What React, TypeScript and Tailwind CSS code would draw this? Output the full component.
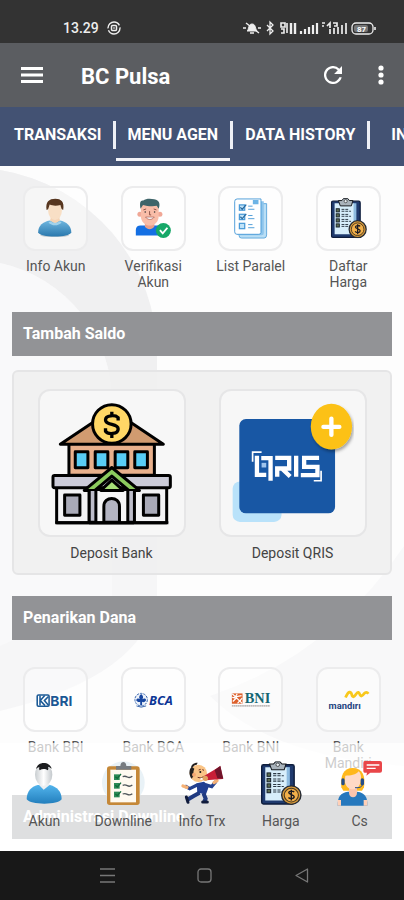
import type { ReactNode } from "react";

function Clipboard({ x, y, width, height }: { x: number; y: number; width: number; height: number }) {
  return (
    <svg x={x} y={y} width={width} height={height} viewBox="0 0 115 128" preserveAspectRatio="none">
      <rect x="2" y="10" width="91" height="115" rx="5" fill="#1f3a6e" stroke="#0e1d3c" strokeWidth="4" />
      <path d="M12 17h62v76l-12 22H12z" fill="#d7eefb" />
      <path d="M72 17h9v68h-9z" fill="#8dbbe0" />
      <path d="M24 8h11l6-7h12l6 7h11l-5 17H30z" fill="#a9b3bb" stroke="#15181d" strokeWidth="3" />
      <circle cx="47" cy="10" r="5" fill="#e8eef2" stroke="#222" strokeWidth="2" />
      {[34, 50, 66, 82].map((row) => (
        <g key={row}>
          <rect x="17" y={row} width="10" height="10" fill="#5d6f50" stroke="#18222c" strokeWidth="3" />
          <path d={`M34 ${row + 2}h22M34 ${row + 8}h30`} stroke="#2a3743" strokeWidth="3" strokeDasharray="9 3" />
        </g>
      ))}
      <circle cx="85" cy="99" r="27" fill="#d89a3a" stroke="#252a33" strokeWidth="4" />
      <circle cx="85" cy="99" r="20" fill="#f2b04a" stroke="#4b3a22" strokeWidth="3" />
      <path d="M93 90c-3-4-15-4-15 2s15 5 15 12-12 7-16 2M85 83v32" fill="none" stroke="#1b1b22" strokeWidth="4" />
    </svg>
  );
}

const infoAkun = (
  <svg viewBox="70 58 195 195" className="size-full" aria-hidden="true">
    <defs>
      <linearGradient id="shirt" x1="0" y1="0" x2="0" y2="1">
        <stop offset="0" stopColor="#6fb6df" />
        <stop offset="1" stopColor="#2a78ad" />
      </linearGradient>
    </defs>
    <ellipse cx="165" cy="210" rx="46" ry="5" fill="#c5cdd2" />
    <path d="M112 200c0-22 16-34 37-38h33c20 4 36 17 36 38-5 9-25 13-53 13s-48-4-53-13z" fill="url(#shirt)" />
    <path d="M150 162l16 10 16-10-5-18h-22z" fill="#f4d3b4" />
    <ellipse cx="166" cy="131" rx="22" ry="29" fill="#f8dfc5" />
    <path d="M139 128c-4-26 8-36 28-36 18 0 30 10 25 36l-5-3-4-13c-12 4-25 3-34-1l-5 15z" fill="#57361f" />
    <path d="M152 164c8 7 20 7 29 0l6 4c-10 12-32 12-42 0z" fill="#9fd1ec" />
  </svg>
);

const verifikasi = (
  <svg viewBox="362 58 195 195" className="size-full" aria-hidden="true">
    <path d="M403 210v-18c0-10 6-14 15-14h56c10 0 16 6 16 16v16z" fill="#146fe3" />
    <path d="M432 170h30v12c-8 10-22 10-30 0z" fill="#e89e8a" />
    <circle cx="416" cy="142" r="8" fill="#f0a796" />
    <circle cx="480" cy="142" r="8" fill="#f0a796" />
    <path d="M419 112h57v36c0 18-14 30-28 30s-29-12-29-30z" fill="#f9bda8" />
    <path d="M418 124c-3-16-2-28 9-26 10-9 38-5 45 0 8 5 8 17 4 26l-6-9c-14 3-32 1-44-3z" fill="#3e6469" />
    <path d="M427 128l9-3M460 125l9 3M447 132v12h5" stroke="#8a5044" strokeWidth="3" fill="none" />
    <circle cx="433" cy="135" r="2.5" fill="#333" />
    <circle cx="463" cy="135" r="2.5" fill="#333" />
    <path d="M434 151c8 10 20 10 28 0z" fill="#fff" stroke="#9c4b40" strokeWidth="2" />
    <circle cx="491" cy="194" r="24" fill="#16a868" />
    <path d="M480 193l9 10 15-18" stroke="#fff" strokeWidth="6" fill="none" />
  </svg>
);

const listParalel = (
  <svg viewBox="51 58 195 195" className="size-full" aria-hidden="true">
    <path d="M112 108h88v100q0 10-8 10h-72q-8 0-8-8z" fill="#b9def5" stroke="#5fa8dc" strokeWidth="3" />
    <path d="M105 100h86v102q0 7-7 7h-70q-9 0-9-8z" fill="#8ec5ec" />
    <path d="M106 93h76v107q0 6-7 6h-70q-7 0-7-8v-97q0-8 8-8z" fill="#fff" stroke="#4a9bd8" strokeWidth="3" />
    <path d="M156 96h18v14h-18z" fill="#6db4e6" />
    {[112, 142, 171].map((row) => (
      <g key={row}>
        <rect x="113" y={row} width="17" height="17" fill="#c0e3f8" stroke="#4a9bd8" strokeWidth="4" />
        <path d={`M141 ${row + 4}h14M141 ${row + 14}h20`} stroke="#4a9bd8" strokeWidth="3" />
      </g>
    ))}
    <path d="M116 120l6 6 13-15M116 150l6 6 13-15" stroke="#27699f" strokeWidth="4" fill="none" />
  </svg>
);

const daftarHarga = (
  <svg viewBox="346 58 195 195" className="size-full" aria-hidden="true">
    <Clipboard x={387} y={90} width={116} height={129} />
  </svg>
);

const depositBank = (
  <svg viewBox="150 305 370 370" className="size-[123px]" aria-hidden="true" stroke="#000" strokeWidth="9" strokeLinejoin="round">
    <path d="M207 430h257v95H207z" fill="#e8b08c" />
    <path d="M181 432l100-67h110l100 67z" fill="#d19b70" />
    {[226, 286, 346, 405].map((x) => (
      <rect key={x} x={x} y="455" width="38" height="48" fill="#58cdf5" />
    ))}
    <path d="M170 560h331v108H170z" fill="#f3f3f5" />
    <rect x="159" y="526" width="353" height="37" rx="5" fill="#cbcbd8" />
    <path d="M268 568h134v100H268z" fill="#f6f6f7" />
    <path d="M253 571l83-69 83 69h-32l-51-43-51 43z" fill="#8ccb5e" />
    <path d="M303 571l33-31 34 31z" fill="#a7de78" />
    <path d="M268 573v94h20v-94M384 573v94h20v-94" fill="#bdbdca" />
    <path d="M312 667v-48c0-32 47-32 47 0v48z" fill="#b3b4c2" />
    <rect x="194" y="585" width="46" height="61" fill="#a9aab8" />
    <rect x="431" y="585" width="46" height="61" fill="#a9aab8" />
    <path d="M166 668h340" />
    <circle cx="336" cy="371" r="58" fill="#ffd766" />
    <path d="M355 361v-9c-9-9-38-8-38 7 0 18 38 9 38 27 0 17-31 17-38 7v-9M336 334v14M336 398v15" fill="none" strokeWidth="10" />
  </svg>
);

const depositQris = (
  <svg viewBox="92 305 370 370" className="size-[123px]" aria-hidden="true">
    <defs>
      <filter id="badge" x="-20%" y="-20%" width="150%" height="150%">
        <feDropShadow dx="4" dy="7" stdDeviation="5" floodOpacity="0.35" />
      </filter>
    </defs>
    <rect x="97" y="544" width="147" height="122" rx="22" fill="#b9e2fa" />
    <rect x="117" y="356" width="288" height="284" rx="20" fill="#1857a4" />
    <path d="M157 485v-29h27M341 542h22v-30" stroke="#fff" strokeWidth="5" fill="none" />
    <g fill="none" stroke="#fff" strokeWidth="13">
      <path d="M170 467v57h28M183 474h28v68" />
      <path d="M231 530v-25h36v-32h-42M244 504l26 25M288 467v63M357 473h-45v27h40v25h-50" />
    </g>
    <path d="M184 488h14v14h-14z" fill="#9fc4ec" />
    <ellipse cx="394" cy="379" rx="62" ry="69" fill="#fcc112" filter="url(#badge)" />
    <path d="M394 355v49M370 380h48" stroke="#fff" strokeWidth="13" strokeLinecap="round" />
  </svg>
);

const bri = (
  <svg viewBox="70 246 195 195" className="size-full" role="img" aria-label="BRI">
    <rect x="109" y="329" width="38" height="36" rx="4" fill="#fff" stroke="#1d5b97" strokeWidth="5" />
    <path d="M118 331v32M133 331l-14 16 15 16M145 334l-13 13 13 15" stroke="#1d5b97" strokeWidth="5" fill="none" />
    <text x="151" y="363" fontSize="44" fontWeight="700" fill="#1c5794" className="font-[Inter,sans-serif]">
      BRI
    </text>
  </svg>
);

const bca = (
  <svg viewBox="362 246 195 195" className="size-full" role="img" aria-label="BCA">
    <circle cx="420" cy="344" r="20" fill="#eef3fb" stroke="#3261ab" strokeWidth="3" strokeDasharray="8 3" />
    <path d="M420 326c8 7 8 12 3 17 7-5 12-3 13 2-3 7-9 8-13 6v11h-6v-11c-5 2-10 0-13-6 2-5 7-7 13-2-5-5-5-10 3-17z" fill="#1746a0" />
    <path d="M405 364q15 8 31 0" stroke="#3261ab" strokeWidth="3" fill="none" />
    <text x="445" y="361" fontSize="41" fontWeight="700" fontStyle="italic" fill="#0d3696" className="font-['Open_Sans',sans-serif]">
      BCA
    </text>
  </svg>
);

const bni = (
  <svg viewBox="50 246 195 195" className="size-full" role="img" aria-label="BNI">
    <rect x="88" y="324" width="34" height="33" fill="#dd602c" />
    <path d="M89 325l32 31M91 350l12-12M105 325l-6 10 20-4M121 339l-15 17M89 337l9 1" stroke="#fff" strokeWidth="4" fill="none" />
    <text x="129" y="356" fontSize="46" fontWeight="700" fill="#146673" className="font-['Liberation_Serif',serif]">
      BNI
    </text>
    <path d="M88 364h122" stroke="#8d8585" strokeWidth="3" strokeDasharray="5 1" />
  </svg>
);

const mandiri = (
  <svg viewBox="346 246 195 195" className="size-full" role="img" aria-label="mandiri">
    <path d="M434 337c10-22 17-20 20-9s8 7 14-2c6-8 9-6 12 2 4 8 8 3 13-3s10-6 14 0" fill="none" stroke="#f8c81c" strokeWidth="9" />
    <text x="380" y="373" fontSize="30" fontWeight="700" fill="#244481" className="font-[Roboto,sans-serif]">
      mandırı
    </text>
  </svg>
);

const navAkun = (
  <svg viewBox="70 75 132 132" className="size-11" aria-hidden="true">
    <defs>
      <linearGradient id="navShirt" x1="0" y1="0" x2="0" y2="1">
        <stop offset="0" stopColor="#52b4ec" />
        <stop offset="1" stopColor="#237fbd" />
      </linearGradient>
      <linearGradient id="navFace">
        <stop offset="0" stopColor="#c8cdd0" />
        <stop offset="0.5" stopColor="#fff" />
        <stop offset="1" stopColor="#c3c8cc" />
      </linearGradient>
    </defs>
    <path d="M84 190c0-24 14-38 33-43h37c21 6 35 19 35 43-7 9-26 13-52 13s-46-4-53-13z" fill="url(#navShirt)" />
    <path d="M121 147l14 14 18-14-4-15h-24z" fill="#eceff1" />
    <ellipse cx="135" cy="116" rx="26" ry="33" fill="url(#navFace)" />
    <path d="M112 99c3-12 12-18 23-18s21 6 24 17c-5-4-8-6-11-6 2 6 1 9-1 11-6-5-17-5-24 0-2-3-2-6-1-10-4 1-7 3-10 6z" fill="#1c1d1f" />
  </svg>
);

const navDownline = (
  <svg viewBox="306 75 132 132" className="size-11" aria-hidden="true">
    <circle cx="373" cy="140" r="64" fill="#e9f2f7" />
    <rect x="324" y="91" width="98" height="116" rx="8" fill="#c58838" />
    <path d="M334 101h77v98h-77z" fill="#fffaf0" />
    <path d="M351 101v-11h13q1-12 9-12t9 12h15v11z" fill="#777c81" />
    {[115, 141, 167].map((row) => (
      <g key={row}>
        <rect x="345" y={row} width="17" height="17" fill="#2c8b57" />
        <path d={`M349 ${row + 7}l6 5 11-13`} stroke="#126b3b" strokeWidth="4" fill="none" />
        <path d={`M371 ${row + 7}q7-3 14 1t15-2`} stroke="#50565b" strokeWidth="4" fill="none" />
      </g>
    ))}
  </svg>
);

const navInfo = (
  <svg viewBox="541 75 132 132" className="size-11" aria-hidden="true">
    <path d="M591 142l22-5 15 13-9 25-26-5z" fill="#223f92" />
    <path d="M594 146l-24 12-14-8M616 146l20 6 13-16" stroke="#24418f" strokeWidth="10" fill="none" />
    <path d="M562 154l-12-4M643 140l9-6" stroke="#f5b175" strokeWidth="10" strokeLinecap="round" />
    <path d="M600 170l-18 10-20 12M611 171l7 17-4 8" stroke="#203a80" strokeWidth="12" fill="none" />
    <path d="M560 183l5 16M609 198h14" stroke="#111c3c" strokeWidth="9" strokeLinecap="round" />
    <circle cx="596" cy="112" r="26" fill="#fac486" />
    <path d="M576 128c-9-10-9-28 0-36l8 6c-4 8-3 14-1 20zM574 92c3-8 10-12 20-12l-3 6c-6 0-9 3-11 8z" fill="#24201e" />
    <circle cx="583" cy="116" r="6" fill="#f5a872" />
    <path d="M597 102l6-2M608 101l5 2M594 124q12 6 18-3" stroke="#6b3225" strokeWidth="3" fill="none" />
    <circle cx="602" cy="108" r="3" fill="#171717" />
    <path d="M602 128q9 3 13-5" stroke="#fff" strokeWidth="5" />
    <path d="M614 119l48-28 8 38-52 4z" fill="#c81f37" />
    <path d="M645 102l17-13 9 39-18-1z" fill="#71142a" />
    <circle cx="617" cy="127" r="8" fill="#e2a15f" />
  </svg>
);

const navHarga = (
  <svg viewBox="171 75 132 132" className="size-11" aria-hidden="true">
    <Clipboard x={177} y={76} width={123} height={131} />
  </svg>
);

const navCs = (
  <svg viewBox="408 75 132 132" className="size-11 overflow-visible" aria-hidden="true">
    <path d="M418 154c-3-34 5-58 34-58 30 0 39 24 34 58l-6 10h-56z" fill="#ffb81c" />
    <path d="M407 209c0-28 8-38 31-42h28c23 4 31 15 30 42z" fill="#2678bd" />
    <path d="M441 155h24v15c0 18-24 18-24 0z" fill="#fbc4ad" />
    <path d="M430 119c15 0 32-2 40-13 8 8 8 17 6 29-2 16-12 25-23 25-14 0-23-11-25-25z" fill="#ffdac6" />
    <rect x="418" y="127" width="10" height="21" rx="5" fill="#244e8b" />
    <rect x="476" y="127" width="10" height="21" rx="5" fill="#244e8b" />
    <path d="M482 145q-3 12-23 10" stroke="#244e8b" strokeWidth="3" fill="none" />
    <path d="M407 192h10v17h-10zM485 192h11v17h-11z" fill="#ffd0b7" />
    <path d="M488 75h46q6 0 6 6v23q0 6-6 6h-29l-12 9 2-9h-7q-4 0-4-5V81q0-6 4-6z" fill="#e94649" />
    <path d="M494 87h38M494 97h27" stroke="#fff" strokeWidth="4" />
  </svg>
);

function MenuItem({ label, children }: { label: string; children: ReactNode }) {
  return (
    <button type="button" className="flex flex-col items-center">
      <span className="size-[65px] overflow-hidden rounded-xl border-2 border-[#ececed] bg-white/40">{children}</span>
      <span className="mt-[7px] w-[72px] text-sm leading-4 text-[#555]">{label}</span>
    </button>
  );
}

function DepositItem({ label, children }: { label: string; children: ReactNode }) {
  return (
    <button type="button" className="flex flex-col items-center">
      <span className="flex size-[148px] items-center justify-center rounded-xl border-2 border-[#e6e6e7] bg-[#f7f7f7]">{children}</span>
      <span className="mt-2 text-sm leading-4 text-[#444]">{label}</span>
    </button>
  );
}

function SectionTitle({ children }: { children: ReactNode }) {
  return (
    <h2 className="mx-3 flex h-11 items-center bg-[#929396] px-[11px] text-base font-bold whitespace-nowrap text-white">
      {children}
    </h2>
  );
}

function StatusBar() {
  return (
    <div className="flex h-[43px] shrink-0 items-center justify-between bg-[#333] pt-3 pr-7 pl-[63px] text-[#eee]">
      <div className="flex items-center gap-2">
        <span className="text-sm font-medium">13.29</span>
        <svg viewBox="0 0 14 14" className="size-[14px]" fill="none" stroke="currentColor" aria-hidden="true">
          <circle cx="7" cy="7" r="6" strokeWidth="1.4" strokeDasharray="16 2" />
          <rect x="4.5" y="4.5" width="5" height="5" rx="1" strokeWidth="1.5" />
          <path d="M7 6v2" />
        </svg>
      </div>
      <svg viewBox="0 0 134 16" className="h-4 w-[134px]" fill="none" stroke="currentColor" aria-hidden="true">
        <path d="M5 11c2-1 1-7 5-7s3 5 5 7z" fill="currentColor" />
        <path d="M4 3l13 10M1 8h3M16 8h3M8 13h4" strokeWidth="1.4" />
        <path d="M25 5l6 6-3 3V2l3 3-6 6" strokeWidth="1.3" />
        <path d="M39 3h4v4h-4zM39 9h3v4h-3M45 3v10" strokeWidth="1.6" />
        <path d="M49 3v11M53 3v11" strokeWidth="2.4" />
        <path d="M59 11v3M63 9v5M67 7v7M71 5v9M75 3v11" strokeWidth="2.2" />
        <path d="M80 3h3M80 6h2M85 6l3-3v5M91 3h4v3h-3M88 9v5M92 8v6M96 7v7M100 5v9M104 3v11" strokeWidth="1.7" />
        <rect x="110" y="3" width="21" height="11" rx="4" strokeWidth="1.3" />
        <path d="M133 7v3" strokeWidth="1.6" />
        <rect x="112" y="5" width="14" height="7" rx="2" fill="#777" stroke="none" />
        <text x="115" y="12" fontSize="8" fontWeight="700" fill="#fff" stroke="none">87</text>
      </svg>
    </div>
  );
}

const bottomItems = [
  { label: "Akun", icon: navAkun },
  { label: "Downline", icon: navDownline },
  { label: "Info Trx", icon: navInfo },
  { label: "Harga", icon: navHarga },
  { label: "Cs", icon: navCs },
];

export default function App() {
  return (
    <div className="flex h-screen flex-col overflow-hidden bg-[#fdfdfd] font-[Roboto,sans-serif]">
      <StatusBar />
      <header className="flex h-16 shrink-0 items-center bg-[#5b5d61] pr-[18px] pl-[21px] text-white">
        <button type="button" aria-label="Menu">
          <svg viewBox="0 0 22 16" className="h-4 w-[22px]" stroke="currentColor" strokeWidth="3" aria-hidden="true">
            <path d="M0 1.5h22M0 8h22M0 14.5h22" />
          </svg>
        </button>
        <h1 className="ml-[38px] flex-1 pt-1 text-[22px] leading-8 font-bold">BC Pulsa</h1>
        <button type="button" aria-label="Muat ulang">
          <svg viewBox="4 4 16 16" className="size-[18px]" fill="currentColor" aria-hidden="true">
            <path d="M17.65 6.35A8 8 0 1 0 19.73 14h-2.08A6 6 0 1 1 12 6c1.66 0 3.14.69 4.22 1.78L13 11h7V4z" />
          </svg>
        </button>
        <button type="button" aria-label="Opsi lainnya" className="ml-[34px]">
          <svg viewBox="0 0 10 20" className="h-5 w-[10px]" fill="currentColor" aria-hidden="true">
            <circle cx="5" cy="3" r="2.6" />
            <circle cx="5" cy="10" r="2.6" />
            <circle cx="5" cy="17" r="2.6" />
          </svg>
        </button>
      </header>
      <nav aria-label="Kategori" className="flex h-[59px] shrink-0 items-center overflow-hidden bg-[#435273] text-base font-bold whitespace-nowrap text-white">
        <button type="button" className="h-full shrink-0 pr-[11px] pb-1 pl-[14px]">TRANSAKSI</button>
        <span className="mb-1 h-7 w-[3px] shrink-0 bg-[#eef0f5]" />
        <button type="button" aria-current="page" className="relative h-full shrink-0 px-3 pb-1">
          MENU AGEN
          <span className="absolute inset-x-0 bottom-[5px] h-[3px] bg-[#f2f3f7]" />
        </button>
        <span className="mb-1 h-7 w-[3px] shrink-0 bg-[#eef0f5]" />
        <button type="button" className="h-full shrink-0 px-3 pb-1">DATA HISTORY</button>
        <span className="mb-1 h-7 w-[3px] shrink-0 bg-[#eef0f5]" />
        <button type="button" className="h-full shrink-0 px-[21px] pb-1">INFO</button>
      </nav>

      <div className="relative min-h-0 flex-1 overflow-hidden">
        <svg viewBox="0 0 404 686" className="absolute top-0 left-0 h-[686px] w-[404px]" aria-hidden="true">
          <path d="M0 4A187 187 0 0 1 157 189V430Q145 510 0 545Z" fill="#f6f6f7" />
          <path d="M0 4A187 187 0 0 1 157 189V240H112A142 142 0 0 0 0 97Z" fill="#f0f0f1" />
          <path d="M0 97A142 142 0 0 1 112 240V430L0 480Z" fill="#f9f9fa" />
          <path d="M404 380V600Q270 590 210 530Q330 490 404 380Z" fill="#f8f8f9" />
        </svg>
        <main className="relative pt-5">
          <div className="grid grid-cols-4 items-start px-[7px]">
            <MenuItem label="Info Akun">{infoAkun}</MenuItem>
            <MenuItem label="Verifikasi Akun">{verifikasi}</MenuItem>
            <MenuItem label="List Paralel">{listParalel}</MenuItem>
            <MenuItem label="Daftar Harga">{daftarHarga}</MenuItem>
          </div>
          <section className="mt-[22px]">
            <SectionTitle>Tambah Saldo</SectionTitle>
            <div className="mx-3 mt-[14px] grid grid-cols-2 rounded-md border-2 border-[#e5e5e6] bg-[#f0f0f0]/90 px-[7px] pt-[17px] pb-3">
              <DepositItem label="Deposit Bank">{depositBank}</DepositItem>
              <DepositItem label="Deposit QRIS">{depositQris}</DepositItem>
            </div>
          </section>
          <section className="mt-[21px]">
            <SectionTitle>Penarikan Dana</SectionTitle>
            <div className="mt-[27px] grid grid-cols-4 items-start px-[7px]">
              <MenuItem label="Bank BRI">{bri}</MenuItem>
              <MenuItem label="Bank BCA">{bca}</MenuItem>
              <MenuItem label="Bank BNI">{bni}</MenuItem>
              <MenuItem label="Bank Mandiri">{mandiri}</MenuItem>
            </div>
          </section>
          <section className="mt-6">
            <SectionTitle>Administrasi Downline</SectionTitle>
          </section>
        </main>

        <nav aria-label="Navigasi utama" className="absolute inset-x-0 bottom-0 grid grid-cols-5 bg-white/70 px-[5px] pt-[18px] pb-[22px]">
          {bottomItems.map(({ label, icon }) => (
            <button key={label} type="button" className="flex flex-col items-center">
              {icon}
              <span className="mt-2 text-sm leading-4 text-[#555]">{label}</span>
            </button>
          ))}
        </nav>
      </div>

      <div className="flex h-[49px] shrink-0 items-center justify-center gap-[82px] bg-[#181818] pl-1 text-[#777]">
        <button type="button" aria-label="Aplikasi terbaru">
          <svg viewBox="0 0 15 15" className="size-[15px]" stroke="currentColor" strokeWidth="1.3" aria-hidden="true">
            <path d="M0 1h15M0 7.5h15M0 14h15" />
          </svg>
        </button>
        <button type="button" aria-label="Beranda">
          <svg viewBox="0 0 15 15" className="size-[15px]" fill="none" stroke="currentColor" strokeWidth="1.3" aria-hidden="true">
            <rect x="1" y="1" width="13" height="13" rx="3" />
          </svg>
        </button>
        <button type="button" aria-label="Kembali">
          <svg viewBox="0 0 15 15" className="size-[15px]" fill="none" stroke="currentColor" strokeWidth="1.3" strokeLinejoin="round" aria-hidden="true">
            <path d="M13.5 1v13L2 7.5z" />
          </svg>
        </button>
      </div>
    </div>
  );
}
